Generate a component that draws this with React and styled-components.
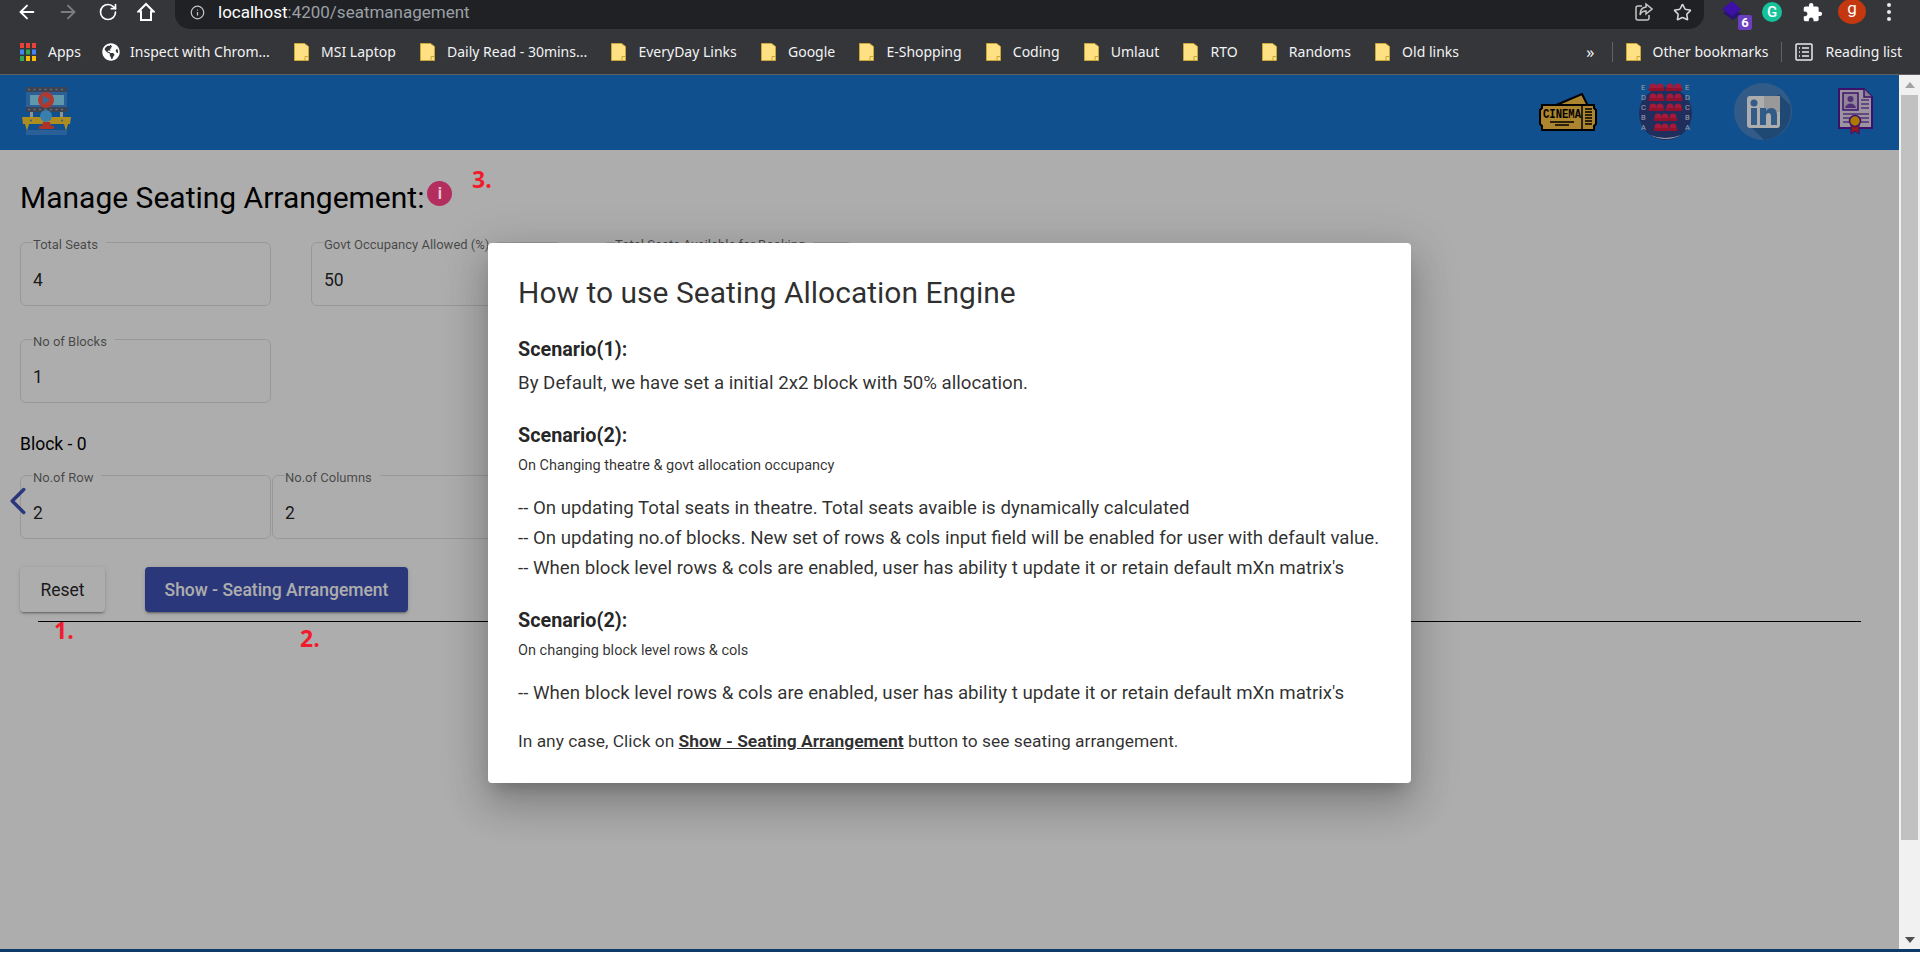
import React from 'react';
import styled, { createGlobalStyle } from 'styled-components';
import { ArrowLeft, ArrowRight, RotateCw, Star, Info, ChevronLeft } from 'lucide-react';
import { FaGlobeAmericas } from 'react-icons/fa';
import { MdExtension } from 'react-icons/md';

const GlobalStyle = createGlobalStyle`
  html, body {
    margin: 0;
    height: 961px;
    overflow: hidden;
    background: #ffffff;
    font-family: Roboto, "Liberation Sans", sans-serif;
  }
  * { box-sizing: border-box; }
`;

const BOOKMARKS = [
  'MSI Laptop',
  'Daily Read - 30mins...',
  'EveryDay Links',
  'Google',
  'E-Shopping',
  'Coding',
  'Umlaut',
  'RTO',
  'Randoms',
  'Old links',
];

const Folder = () => (
  <svg width="15" height="18" viewBox="0 0 15 18">
    <path d="M.5.5h10l4 3v14H.5z" fill="#ffe083" stroke="#c9a63a" />
    <path d="M11 13.5h3.5M11 13.5v4" fill="none" stroke="#c9a63a" />
  </svg>
);

const AppsGrid = () => {
  const colors = ['#ea4335', '#ea4335', '#ea4335', '#4285f4', '#34a853', '#4285f4', '#34a853', '#fbbc04', '#fbbc04'];
  return (
    <svg width="16" height="18" viewBox="0 0 16 18">
      {colors.map((c, i) => (
        <rect key={i} x={(i % 3) * 6} y={Math.floor(i / 3) * 6.5} width="4" height="5" fill={c} />
      ))}
    </svg>
  );
};

const HomeIcon = () => (
  <svg width="18" height="20" viewBox="0 0 18 20" fill="none" stroke="#fff" strokeWidth="2">
    <path d="M9 2 1.5 9.5H4V18h10V9.5h2.5z" />
  </svg>
);

const ShareIcon = () => (
  <svg width="18" height="20" viewBox="0 0 18 20" fill="none" stroke="#c4c7c5" strokeWidth="1.5">
    <path d="M7 4H3a2 2 0 0 0-2 2v10a2 2 0 0 0 2 2h9a2 2 0 0 0 2-2v-3" />
    <path d="M11 2l6 5-6 5V9C8 9 6 10 5 13c0-5 2-7.500 6-8z" />
  </svg>
);

const StackIcon = () => (
  <svg width="28" height="32" viewBox="0 0 28 32">
    <path d="M2 13 12 20l8-6-8-7z" fill="#2a1470" />
    <path d="M1 9 11 1l9 8-9 7z" fill="#3d10a8" />
  </svg>
);

const ReadingIcon = () => (
  <svg width="18" height="18" viewBox="0 0 18 18" fill="none" stroke="#e8eaed" strokeWidth="1.500">
    <rect x="1" y="1" width="16" height="16" rx="1" />
    <path d="M7 5h7M7 9h7M7 13h7M4 5h1M4 9h1M4 13h1" />
  </svg>
);

const AppLogo = () => (
  <svg width="49" height="49" viewBox="0 0 49 49">
    <path d="M8 25h3v6H8zM38 25h3v6h-3z" fill="#d8d8d8" />
    <rect x="4" y="0" width="41" height="25" fill="#3e8ce0" />
    <rect x="4" y="0" width="41" height="5" fill="#5a6476" />
    <rect x="4" y="20" width="41" height="5" fill="#5a6476" />
    <path d="M6 2.500h37M6 22.500h37" stroke="#9aa2ae" strokeWidth="1.500" strokeDasharray="2 3.500" />
    <rect x="8" y="8" width="34" height="10" fill="#8de0fb" />
    <circle cx="24" cy="13" r="8" fill="#ff5548" />
    <path d="M21 8.500l7 4.500-7 4.500z" fill="#4aa0e8" />
    <path d="M0 30h49l-1 7h-2l-2 7-2-7H7l-2 7-2-7H1z" fill="#ffd02e" />
    <circle cx="24" cy="29" r="6" fill="#55bcff" />
    <circle cx="9" cy="33.500" r="1" fill="#3e8ce0" />
    <circle cx="40" cy="33.500" r="1" fill="#3e8ce0" />
    <path d="M21 35h7l1 4h3v3H17v-3h3z" fill="#ff4a3c" />
    <rect x="4" y="43" width="41" height="5" fill="#3e8ce0" />
  </svg>
);

const TicketIcon = () => (
  <svg width="58" height="39" viewBox="0 0 58 39">
    <path d="M15 14 43 2l6 12z" fill="#ffc444" stroke="#000" strokeWidth="2" />
    <path d="M3 13h52v3l2 2v14l-2 2v4H3v-4l-2-2V18l2-2z" fill="#ffc444" stroke="#000" strokeWidth="2" />
    <text x="4" y="26" fontFamily="Liberation Mono, monospace" fontWeight="700" fontSize="12" fill="#000" textLength="38" lengthAdjust="spacingAndGlyphs">CINEMA</text>
    <path d="M11 30h24M16 33h14M43 14v23" stroke="#000" strokeWidth="1.500" />
    <path d="M46 17h7M46 20h7M46 23h7M46 26h7M46 29h7M46 32h7" stroke="#000" strokeWidth="1.500" />
  </svg>
);

const SeatsIcon = () => {
  const rows = [
    { y: 4, xs: [15, 22, 32, 40], tag: 'E' },
    { y: 14, xs: [15, 22, 32, 40], tag: 'D' },
    { y: 24, xs: [15, 22, 32, 40], tag: 'C' },
    { y: 34, xs: [20, 27, 35], tag: 'B' },
    { y: 44, xs: [20, 27, 35], tag: 'A' },
  ];
  return (
    <svg width="55" height="57" viewBox="0 0 55 57">
      <circle cx="27.500" cy="30.500" r="26.500" fill="#2e458a" />
      <path d="M12 52q15 6 31 0q-15 8-31 0z" fill="#e6ecf6" />
      {rows.map((r) => (
        <g key={r.y}>
          {r.xs.map((x) => (
            <g key={x}>
              <circle cx={x} cy={r.y} r="3.500" fill="#f52555" />
              <rect x={x - 4.5} y={r.y + 1} width="9" height="3" rx="1.500" fill="#d81b45" />
            </g>
          ))}
          <text x="3" y={r.y + 3} fontFamily="Roboto, sans-serif" fontSize="7.500" fill="#e6ecf6">{r.tag}</text>
          <text x="47" y={r.y + 3} fontFamily="Roboto, sans-serif" fontSize="7.500" fill="#e6ecf6">{r.tag}</text>
        </g>
      ))}
    </svg>
  );
};

const LinkedInIcon = () => (
  <svg width="58" height="57" viewBox="0 0 58 57">
    <ellipse cx="29" cy="28.500" rx="29" ry="28.500" fill="#4a86c8" />
    <path d="M45 11 56 22A29 28.500 0 0 1 30 57L14 41z" fill="#2f6aa8" />
    <rect x="13" y="13" width="33" height="32" rx="3" fill="#ffffff" />
    <rect x="30" y="13" width="16" height="16" fill="#e2e2e2" />
    <circle cx="20" cy="20" r="3.500" fill="#4a86c8" />
    <rect x="17" y="25" width="6" height="17" fill="#4a86c8" />
    <path d="M26 25h6v3c2-4 11-5 11 4v10h-6v-9c0-4-5-4-5 0v9h-6z" fill="#4a86c8" />
  </svg>
);

const CertIcon = () => (
  <svg width="35" height="47" viewBox="0 0 35 47">
    <path d="M1 1h25l8 8v31H1z" fill="#e6dcee" stroke="#5b1a9e" strokeWidth="2" />
    <path d="M26 1v8h8" fill="#c8b6d8" stroke="#5b1a9e" strokeWidth="1.500" />
    <rect x="5" y="5" width="15" height="17" fill="#d3c3e0" stroke="#5b1a9e" strokeWidth="1.500" />
    <circle cx="12.500" cy="11" r="3" fill="#7a45b0" />
    <path d="M7 20c1-6 10-6 11 0z" fill="#7a45b0" />
    <path d="M23 12h8M23 16h8M23 20h8M5 26h26M5 30h8M22 30h9M5 34h8M22 34h9" stroke="#7a45b0" strokeWidth="1.500" />
    <path d="M13 36v10l4-3 4 3V36z" fill="#d9262c" stroke="#5b1a9e" />
    <circle cx="17" cy="33" r="5.500" fill="#ffb300" stroke="#5b1a9e" strokeWidth="1.500" />
  </svg>
);

const Field = ({ label, value }) => (
  <FieldBox>
    <FieldLegend>{label}</FieldLegend>
    <FieldValue>{value}</FieldValue>
  </FieldBox>
);

const App = () => (
  <Screen>
    <GlobalStyle />
    <AddressRow>
      <NavIcons>
        <ArrowLeft size={22} color="#ffffff" strokeWidth={2} />
        <ArrowRight size={22} color="#7b7d80" strokeWidth={2} />
        <RotateCw size={20} color="#ffffff" strokeWidth={2} />
        <HomeIcon />
      </NavIcons>
      <UrlPill>
        <Info size={15} color="#c4c7c5" strokeWidth={2} />
        <UrlText>
          localhost<UrlMuted>:4200/seatmanagement</UrlMuted>
        </UrlText>
        <PillActions>
          <ShareIcon />
          <Star size={19} color="#d5d7d9" strokeWidth={2} />
        </PillActions>
      </UrlPill>
      <ExtensionIcons>
        <StackBadge>
          <StackIcon />
          <CountBadge>6</CountBadge>
        </StackBadge>
        <GrammarlyDot>G</GrammarlyDot>
        <MdExtension size={21} color="#ffffff" />
        <Avatar>g</Avatar>
        <KebabDots>
          <i />
          <i />
          <i />
        </KebabDots>
      </ExtensionIcons>
    </AddressRow>
    <BookmarkBar>
      <AppsBookmark>
        <AppsGrid />
        Apps
      </AppsBookmark>
      <GlobeBookmark>
        <FaGlobeAmericas size={18} color="#ffffff" />
        Inspect with Chrom...
      </GlobeBookmark>
      {BOOKMARKS.map((name) => (
        <Bookmark key={name}>
          <Folder />
          {name}
        </Bookmark>
      ))}
      <BookmarkEnd>
        <MoreMark>»</MoreMark>
        <BarDivider />
        <Bookmark>
          <Folder />
          Other bookmarks
        </Bookmark>
        <BarDivider />
        <Bookmark>
          <ReadingIcon />
          Reading list
        </Bookmark>
      </BookmarkEnd>
    </BookmarkBar>
    <Viewport>
      <Page>
        <AppHeader>
          <AppLogo />
          <HeaderLinks>
            <TicketIcon />
            <SeatsIcon />
            <LinkedInIcon />
            <CertLink>
              <CertIcon />
            </CertLink>
          </HeaderLinks>
        </AppHeader>
        <Content>
          <TitleRow>
            <PageTitle>Manage Seating Arrangement:</PageTitle>
            <InfoDot>i</InfoDot>
          </TitleRow>
          <FieldRow $gap={40}>
            <Field label="Total Seats" value="4" />
            <Field label="Govt Occupancy Allowed (%)" value="50" />
            <Field label="Total Seats Available for Booking" />
          </FieldRow>
          <FieldRow $gap={40}>
            <Field label="No of Blocks" value="1" />
          </FieldRow>
          <BlockLabel>Block - 0</BlockLabel>
          <BlockRow>
            <BackChevron>
              <ChevronLeft size={46} color="#3f51b5" strokeWidth={1.8} />
            </BackChevron>
            <FieldRow $gap={1}>
              <Field label="No.of Row" value="2" />
              <Field label="No.of Columns" value="2" />
            </FieldRow>
          </BlockRow>
          <ButtonRow>
            <ResetButton>Reset</ResetButton>
            <ShowButton>Show - Seating Arrangement</ShowButton>
          </ButtonRow>
          <Rule />
        </Content>
        <Backdrop />
        <Dialog>
          <DialogTitle>How to use Seating Allocation Engine</DialogTitle>
          <ScenarioHead>Scenario(1):</ScenarioHead>
          <IntroLine>By Default, we have set a initial 2x2 block with 50% allocation.</IntroLine>
          <ScenarioHead $top={25}>Scenario(2):</ScenarioHead>
          <SubLine>On Changing theatre &amp; govt allocation occupancy</SubLine>
          <BodyList>
            <BodyLine>-- On updating Total seats in theatre. Total seats avaible is dynamically calculated</BodyLine>
            <BodyLine>-- On updating no.of blocks. New set of rows &amp; cols input field will be enabled for user with default value.</BodyLine>
            <BodyLine>-- When block level rows &amp; cols are enabled, user has ability t update it or retain default mXn matrix's</BodyLine>
          </BodyList>
          <ScenarioHead $top={25}>Scenario(2):</ScenarioHead>
          <SubLine>On changing block level rows &amp; cols</SubLine>
          <BodyList>
            <BodyLine>-- When block level rows &amp; cols are enabled, user has ability t update it or retain default mXn matrix's</BodyLine>
          </BodyList>
          <ClosingLine>
            In any case, Click on <strong><u>Show - Seating Arrangement</u></strong> button to see seating arrangement.
          </ClosingLine>
        </Dialog>
        <Mark $x={54} $y={540}>1.</Mark>
        <Mark $x={300} $y={548}>2.</Mark>
        <Mark $x={472} $y={89}>3.</Mark>
      </Page>
      <Scrollbar>
        <ScrollArrow $dir="up" />
        <ScrollThumb />
        <ScrollArrow $dir="down" />
      </Scrollbar>
    </Viewport>
    <BottomEdge />
  </Screen>
);

const Screen = styled.div`
  display: flex;
  flex-direction: column;
  height: 961px;
  background: #ffffff;
`;

const AddressRow = styled.div`
  display: flex;
  height: 29px;
  background: #35363a;
`;

const NavIcons = styled.div`
  display: flex;
  align-items: center;
  gap: 19px;
  width: 175px;
  padding: 0 0 5px 16px;
`;

const UrlPill = styled.div`
  display: flex;
  align-items: center;
  width: 1529px;
  padding: 0 12px 5px 15px;
  background: #202124;
  border-radius: 0 0 15px 15px;
`;

const UrlText = styled.span`
  margin-left: 13px;
  font-size: 17px;
  color: #ffffff;
`;

const UrlMuted = styled.span`
  color: #9aa0a6;
`;

const PillActions = styled.div`
  display: flex;
  align-items: center;
  gap: 20px;
  margin-left: auto;
`;

const ExtensionIcons = styled.div`
  display: flex;
  align-items: center;
  gap: 20px;
  flex: 1;
  padding: 0 0 5px 17px;
`;

const StackBadge = styled.div`
  position: relative;
  width: 28px;
  height: 24px;
  svg {
    display: block;
  }
`;

const CountBadge = styled.span`
  position: absolute;
  right: -3px;
  bottom: -6px;
  width: 14px;
  height: 15px;
  border-radius: 2px;
  background: #6a3fc0;
  color: #ffffff;
  font-size: 13px;
  font-weight: 700;
  line-height: 15px;
  text-align: center;
`;

const GrammarlyDot = styled.span`
  width: 20px;
  height: 20px;
  margin-left: -7px;
  border-radius: 50%;
  background: #15c39a;
  color: #ffffff;
  font-size: 15px;
  font-weight: 500;
  line-height: 20px;
  text-align: center;
`;

const Avatar = styled.span`
  width: 28px;
  height: 25px;
  margin: -1px 0 0 -5px;
  border-radius: 50%;
  background: #c5380f;
  color: #ffffff;
  font-size: 17px;
  line-height: 19px;
  text-align: center;
`;

const KebabDots = styled.span`
  display: flex;
  flex-direction: column;
  gap: 3px;
  margin-left: 1px;
  i {
    width: 4px;
    height: 4px;
    border-radius: 50%;
    background: #e8eaed;
  }
`;

const BookmarkBar = styled.div`
  display: flex;
  align-items: center;
  gap: 24.200px;
  height: 46px;
  padding: 0 18px 0 20px;
  background: #35363a;
  border-bottom: 1px solid #5f6063;
`;

const Bookmark = styled.div`
  display: flex;
  align-items: center;
  gap: 12px;
  font-family: "Noto Sans", "Open Sans", sans-serif;
  font-size: 14px;
  color: #f1f3f4;
  white-space: nowrap;
`;

const AppsBookmark = styled(Bookmark)`
  margin-right: -3px;
`;

const GlobeBookmark = styled(Bookmark)`
  gap: 10px;
`;

const BookmarkEnd = styled.div`
  display: flex;
  align-items: center;
  gap: 13px;
  margin-left: auto;
`;

const MoreMark = styled.span`
  margin-right: 4px;
  font-family: "Noto Sans", sans-serif;
  font-size: 16px;
  color: #f1f3f4;
`;

const BarDivider = styled.span`
  width: 1px;
  height: 20px;
  background: #5f6368;
`;

const Viewport = styled.div`
  display: flex;
  height: 874px;
`;

const Page = styled.main`
  position: relative;
  flex: 1;
  background: #ffffff;
  overflow: hidden;
`;

const AppHeader = styled.header`
  display: flex;
  align-items: center;
  justify-content: space-between;
  height: 75px;
  padding: 0 26px 3px 22px;
  background: #1976d2;
`;

const HeaderLinks = styled.div`
  display: flex;
  align-items: center;
  gap: 41px;
  svg {
    display: block;
  }
`;

const CertLink = styled.a`
  margin-left: 5px;
`;

const Content = styled.div`
  padding: 28px 0 0 20px;
`;

const TitleRow = styled.div`
  display: flex;
  align-items: flex-start;
  height: 57px;
`;

const PageTitle = styled.h1`
  margin: 0;
  font-size: 30px;
  font-weight: 400;
  line-height: 40px;
  color: #000000;
`;

const InfoDot = styled.span`
  position: relative;
  z-index: 2;
  width: 25px;
  height: 25px;
  margin-left: 3px;
  margin-top: 3px;
  border-radius: 50%;
  background: #b32e5f;
  color: #e8c9d5;
  font-size: 16px;
  font-weight: 700;
  line-height: 25px;
  text-align: center;
`;

const FieldRow = styled.div`
  display: flex;
  gap: ${(p) => p.$gap}px;
  margin-bottom: 26px;
`;

const FieldBox = styled.fieldset`
  width: 251px;
  height: 71px;
  margin: 0;
  padding: 0 12px;
  border: 1.5px solid rgba(0, 0, 0, 0.12);
  border-radius: 6px;
`;

const FieldLegend = styled.legend`
  position: relative;
  top: 3px;
  padding: 0 8px 0 0;
  font-size: 13px;
  line-height: 14px;
  color: rgba(0, 0, 0, 0.6);
  white-space: nowrap;
`;

const FieldValue = styled.div`
  margin-top: 18.500px;
  font-size: 17.500px;
  line-height: 24px;
  color: rgba(0, 0, 0, 0.87);
`;

const BlockLabel = styled.div`
  margin-top: 29px;
  font-size: 17.500px;
  line-height: 24px;
  color: #000000;
`;

const BlockRow = styled.div`
  position: relative;
  margin-top: 12px;
`;

const BackChevron = styled.span`
  position: absolute;
  left: -25px;
  top: 10px;
  z-index: 1;
`;

const ButtonRow = styled.div`
  display: flex;
  gap: 40px;
  margin-top: 28px;
`;

const ResetButton = styled.button`
  width: 85px;
  height: 45px;
  border: 0;
  border-radius: 4px;
  background: #ffffff;
  box-shadow: 0 3px 1px -2px rgba(0, 0, 0, 0.2), 0 2px 2px 0 rgba(0, 0, 0, 0.14), 0 1px 5px 0 rgba(0, 0, 0, 0.12);
  font-family: inherit;
  font-size: 17.500px;
  color: rgba(0, 0, 0, 0.87);
`;

const ShowButton = styled(ResetButton)`
  width: 263px;
  background: #3f51b5;
  color: #ffffff;
  font-weight: 500;
`;

const Rule = styled.hr`
  width: 1823px;
  height: 1px;
  margin: 9px 0 0 18px;
  border: 0;
  background: #000000;
`;

const Backdrop = styled.div`
  position: absolute;
  inset: 0;
  z-index: 1;
  background: rgba(0, 0, 0, 0.32);
`;

const Dialog = styled.section`
  position: absolute;
  left: 488px;
  top: 168px;
  z-index: 2;
  width: 923px;
  height: 540px;
  padding: 30px;
  border-radius: 4px;
  background: #ffffff;
  color: rgba(0, 0, 0, 0.82);
  box-shadow: 0 11px 15px -7px rgba(0, 0, 0, 0.2), 0 24px 38px 3px rgba(0, 0, 0, 0.14), 0 9px 46px 8px rgba(0, 0, 0, 0.12);
`;

const DialogTitle = styled.h2`
  margin: 0 0 24px;
  font-size: 30px;
  font-weight: 400;
  line-height: 40px;
`;

const ScenarioHead = styled.h3`
  margin: ${(p) => p.$top || 0}px 0 0;
  font-size: 19.800px;
  font-weight: 700;
  line-height: 26px;
  color: rgba(0, 0, 0, 0.87);
`;

const BodyLine = styled.p`
  margin: 0;
  font-size: 18.700px;
  line-height: 30px;
  white-space: nowrap;
`;

const IntroLine = styled(BodyLine)`
  margin-top: 5px;
`;

const SubLine = styled.p`
  margin: 5px 0 0;
  font-size: 14.500px;
  line-height: 24px;
`;

const BodyList = styled.div`
  margin-top: 15px;
`;

const ClosingLine = styled(BodyLine)`
  margin-top: 18px;
  font-size: 17.400px;
`;

const Mark = styled.span`
  position: absolute;
  left: ${(p) => p.$x}px;
  top: ${(p) => p.$y}px;
  z-index: 3;
  font-family: "Open Sans", sans-serif;
  font-size: 23px;
  font-weight: 700;
  line-height: 30px;
  color: #f01c2c;
`;

const Scrollbar = styled.aside`
  display: flex;
  flex-direction: column;
  align-items: center;
  width: 21px;
  background: #f1f1f1;
`;

const ScrollArrow = styled.span`
  width: 0;
  height: 0;
  margin: ${(p) => (p.$dir === 'up' ? '7px 0 7px' : 'auto 0 6px')};
  border-left: 5px solid transparent;
  border-right: 5px solid transparent;
  ${(p) => (p.$dir === 'up' ? 'border-bottom: 6px solid #a3a3a3;' : 'border-top: 6px solid #505050;')}
`;

const ScrollThumb = styled.span`
  width: 17px;
  height: 745px;
  background: #c1c1c1;
`;

const BottomEdge = styled.div`
  height: 3px;
  background: #0d3a66;
`;

export default App;
